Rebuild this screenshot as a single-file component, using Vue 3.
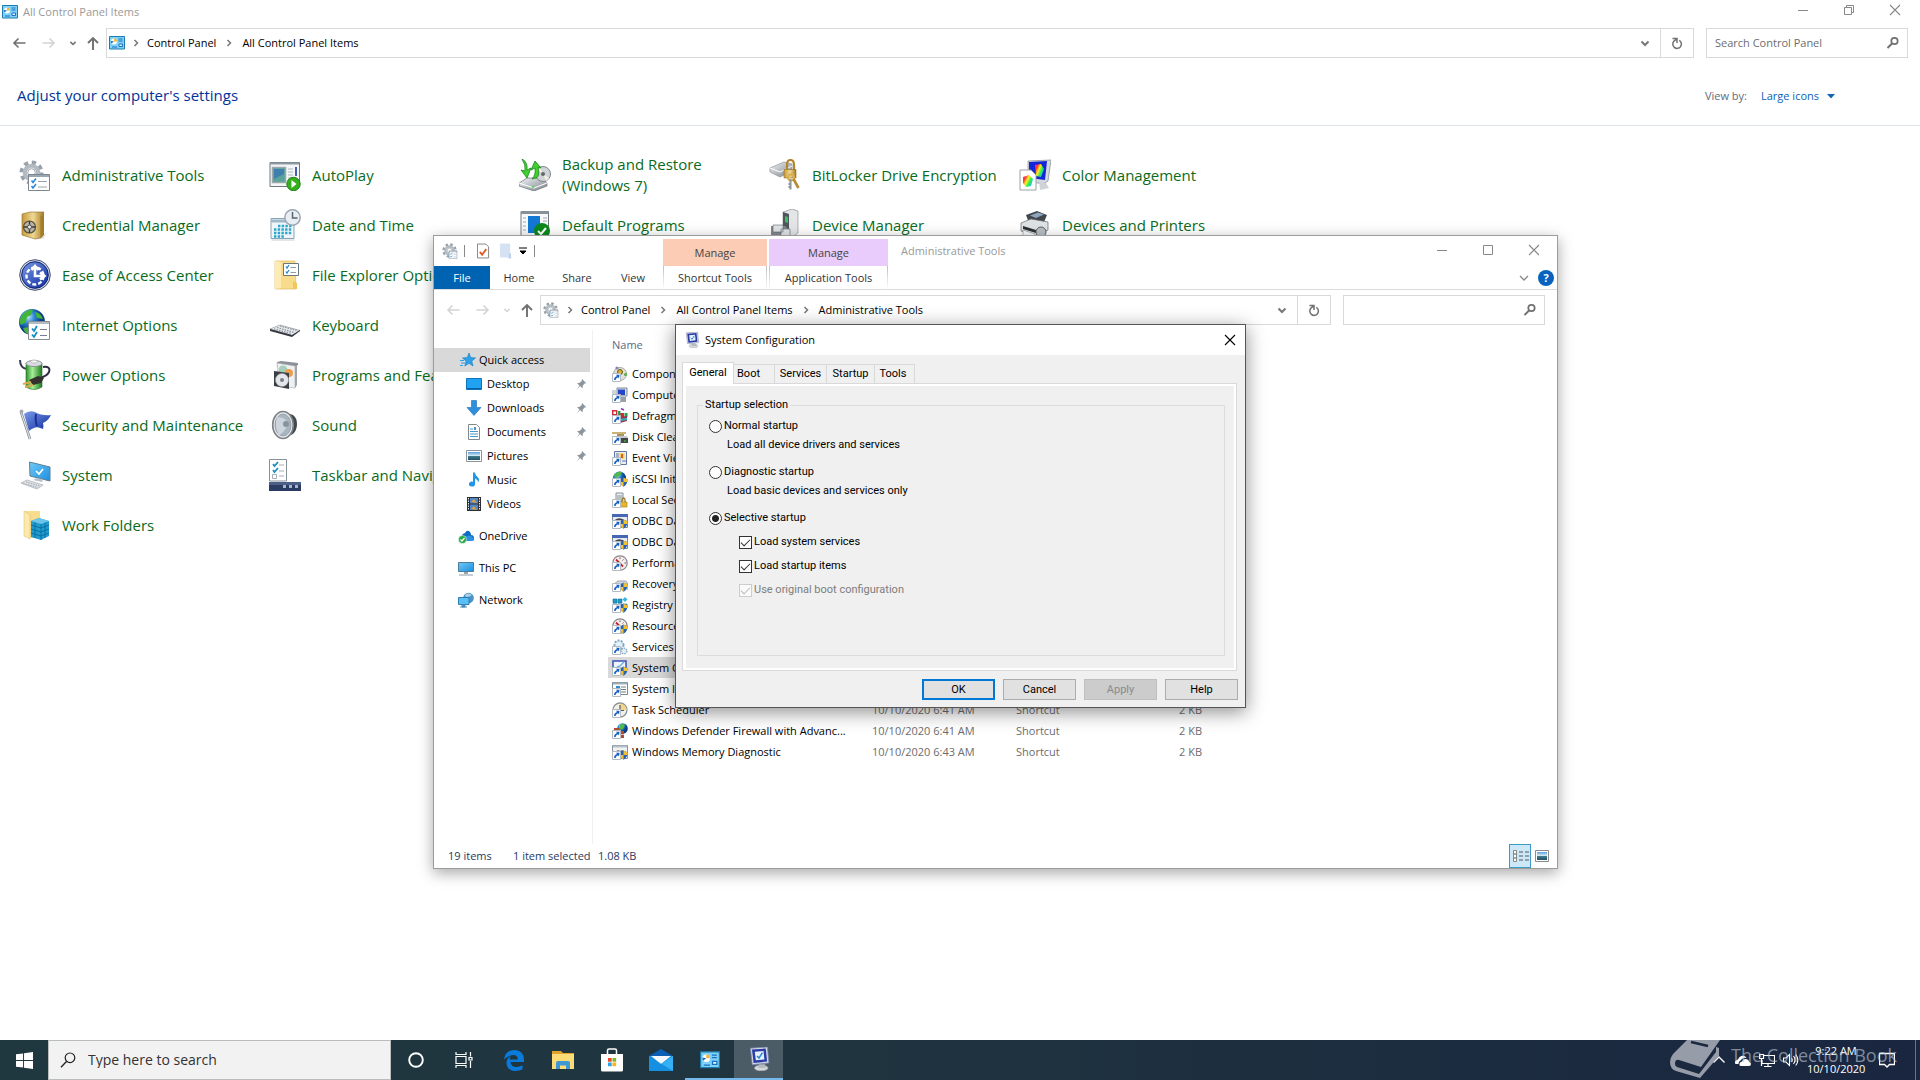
<script setup>
import { ref } from 'vue'

const panelColumns = [
  [
    ['admin', 'Administrative Tools'],
    ['safe', 'Credential Manager'],
    ['ease', 'Ease of Access Center'],
    ['inet', 'Internet Options'],
    ['power', 'Power Options'],
    ['flag', 'Security and Maintenance'],
    ['system', 'System'],
    ['workf', 'Work Folders'],
  ],
  [
    ['autoplay', 'AutoPlay'],
    ['datetime', 'Date and Time'],
    ['folderopt', 'File Explorer Options'],
    ['keyboard', 'Keyboard'],
    ['programs', 'Programs and Features'],
    ['sound', 'Sound'],
    ['taskbar', 'Taskbar and Navigation'],
  ],
  [
    ['backup', 'Backup and Restore (Windows 7)'],
    ['defaults', 'Default Programs'],
  ],
  [
    ['bitlocker', 'BitLocker Drive Encryption'],
    ['devmgr', 'Device Manager'],
  ],
  [
    ['color', 'Color Management'],
    ['printer', 'Devices and Printers'],
  ],
]

const places = [
  { icon: 'star', name: 'Quick access', kind: 'active' },
  { icon: 'desk', name: 'Desktop', kind: 'child', pin: true },
  { icon: 'down', name: 'Downloads', kind: 'child', pin: true },
  { icon: 'docs', name: 'Documents', kind: 'child', pin: true },
  { icon: 'pics', name: 'Pictures', kind: 'child', pin: true },
  { icon: 'music', name: 'Music', kind: 'child' },
  { icon: 'video', name: 'Videos', kind: 'child' },
  { icon: 'onedrive', name: 'OneDrive', kind: 'root' },
  { icon: 'pc', name: 'This PC', kind: 'root' },
  { icon: 'network', name: 'Network', kind: 'root' },
]

const files = [
  ['f-comp', 'Component Services', '6:41', false],
  ['f-mgmt', 'Computer Management', '6:41', false],
  ['f-defrag', 'Defragment and Optimize Drives', '6:41', false],
  ['f-disk', 'Disk Cleanup', '6:41', false],
  ['f-event', 'Event Viewer', '6:41', false],
  ['f-iscsi', 'iSCSI Initiator', '6:41', true],
  ['f-local', 'Local Security Policy', '6:41', false],
  ['f-odbc', 'ODBC Data Sources (32-bit)', '6:41', true],
  ['f-odbc', 'ODBC Data Sources (64-bit)', '6:41', true],
  ['f-perf', 'Performance Monitor', '6:41', false],
  ['f-rec', 'Recovery Drive', '6:41', true],
  ['f-reg', 'Registry Editor', '6:41', true],
  ['f-perf', 'Resource Monitor', '6:41', true],
  ['f-serv', 'Services', '6:41', false],
  ['f-conf', 'System Configuration', '6:41', true],
  ['f-info', 'System Information', '6:41', false],
  ['f-task', 'Task Scheduler', '6:41', false],
  ['f-fire', 'Windows Defender Firewall with Advanc...', '6:41', false],
  ['f-mem', 'Windows Memory Diagnostic', '6:43', true],
]

const tabs = ['General', 'Boot', 'Services', 'Startup', 'Tools']
const startup = ref('selective')
const loadServices = ref(true)
const loadItems = ref(true)
const originalBoot = ref(true)

const apps = [
  ['t-cortana', 'Cortana', ''],
  ['t-view', 'Task View', ''],
  ['t-edge', 'Microsoft Edge', ''],
  ['t-files', 'File Explorer', ''],
  ['t-store', 'Microsoft Store', ''],
  ['t-mail', 'Mail', ''],
  ['cpl', 'Control Panel', 'running'],
  ['msconfig', 'System Configuration', 'current'],
]
</script>

<template>
  <div class="desktop">
    <svg class="sheet" aria-hidden="true">
      <defs>
        <linearGradient id="g-steel" x2="1" y2="1"><stop stop-color="#f4f6f8" /><stop offset="1" stop-color="#7b8289" /></linearGradient>
        <linearGradient id="g-gold" x2="1"><stop stop-color="#c79a3e" /><stop offset=".5" stop-color="#f0d893" /><stop offset="1" stop-color="#a67c25" /></linearGradient>
        <linearGradient id="g-blue" x2="1" y2="1"><stop stop-color="#7a9be8" /><stop offset="1" stop-color="#0d2a9c" /></linearGradient>
        <linearGradient id="g-sky" x2="1" y2="1"><stop stop-color="#6fcaf7" /><stop offset="1" stop-color="#1c8ede" /></linearGradient>
        <linearGradient id="g-green" x2="1"><stop stop-color="#2c8f2b" /><stop offset=".4" stop-color="#a5ef97" /><stop offset="1" stop-color="#1f7a20" /></linearGradient>
        <linearGradient id="g-rain" x2="1" y2=".6"><stop stop-color="#f2f" /><stop offset=".25" stop-color="#f33" /><stop offset=".5" stop-color="#fe2" /><stop offset=".75" stop-color="#2e5" /><stop offset="1" stop-color="#2bf" /></linearGradient>
        <linearGradient id="g-photo" y2="1" x2="0"><stop stop-color="#5b9fe0" /><stop offset=".5" stop-color="#dff0f6" /><stop offset=".55" stop-color="#3d7a86" /><stop offset="1" stop-color="#24506b" /></linearGradient>
        <radialGradient id="g-globe" cx=".35" cy=".3"><stop stop-color="#bfe8ff" /><stop offset=".5" stop-color="#2a86d6" /><stop offset="1" stop-color="#0b3c86" /></radialGradient>
      </defs>

      <!-- controls -->
      <symbol id="back" viewBox="0 0 16 16"><path d="M14.500 8H3M7.500 3.500L3 8l4.500 4.500" fill="none" stroke="currentColor" stroke-width="1.600" /></symbol>
      <symbol id="fwd" viewBox="0 0 16 16"><path d="M1.500 8H13M8.500 3.500L13 8l-4.500 4.500" fill="none" stroke="currentColor" stroke-width="1.600" /></symbol>
      <symbol id="up" viewBox="0 0 16 16"><path d="M8 15V3M3 8l5-5 5 5" fill="none" stroke="currentColor" stroke-width="1.900" /></symbol>
      <symbol id="chev-d" viewBox="0 0 16 16"><path d="M4.500 6.500L8 10l3.500-3.500" fill="none" stroke="currentColor" stroke-width="2" /></symbol>
      <symbol id="chev-r" viewBox="0 0 16 16"><path d="M6.500 5L9.500 8l-3 3" fill="none" stroke="currentColor" stroke-width="1.500" /></symbol>
      <symbol id="thin-d" viewBox="0 0 16 16"><path d="M4 6l4 4 4-4" fill="none" stroke="currentColor" stroke-width="1.300" /></symbol>
      <symbol id="reload" viewBox="0 0 16 16"><path d="M10.300 5.400A4.300 4.300 0 1 1 5 6.100L7.500 4M3.500 3.500h4.500v4.500" fill="none" stroke="currentColor" stroke-width="1.500" /></symbol>
      <symbol id="lens" viewBox="0 0 16 16"><circle cx="9.500" cy="6" r="3.200" fill="none" stroke="currentColor" stroke-width="1.700" /><path d="M7 8.500L2.500 13" stroke="currentColor" stroke-width="1.900" /></symbol>
      <symbol id="min" viewBox="0 0 16 16"><path d="M3 8.500h10" stroke="currentColor" /></symbol>
      <symbol id="max" viewBox="0 0 16 16"><path d="M3.500 3.500h9v9h-9z" fill="none" stroke="currentColor" /></symbol>
      <symbol id="restore" viewBox="0 0 16 16"><path d="M3.500 5.500h7v7h-7zM5.500 5.500v-2h7v7h-2" fill="none" stroke="currentColor" /></symbol>
      <symbol id="close" viewBox="0 0 16 16"><path d="M3 3l10 10M13 3L3 13" stroke="currentColor" stroke-width="1.100" /></symbol>
      <symbol id="pin" viewBox="0 0 16 16"><path d="M9 2l5 5-2 .5-2 2.500-.3 3-2.700-2.600L3 14.500l3.300-4.800L3.500 7l3-.4L9 4.200z" fill="#8d959c" /></symbol>
      <symbol id="sheet-list" viewBox="0 0 14 15"><path d="M.5 1.500h13v13H.5z" fill="#fff" stroke="#8796a5" /><path d="M0 3h14" stroke="#8796a5" /><path d="M2.500 6l1 1.500L6 5M2.500 10.500l1 1.500L6 9.500" fill="none" stroke="#2a86d6" stroke-width="1.200" /><path d="M7.500 7H12M7.500 11.500H12" stroke="#aab3bb" /></symbol>

      <symbol id="cpl" viewBox="0 0 16 14"><path d="M.5.500h15v12.500H.5z" fill="#7ed2f7" stroke="#1f7cae" /><circle cx="5" cy="5.500" r="3" fill="#fff" /><path d="M5 5.500V2.500A3 3 0 0 1 8 5.500z" fill="#f0b53a" /><path d="M5 5.500L2.500 7.500A3 3 0 0 1 2 5z" fill="#1a6fc4" /><path d="M9.500 3h4M9.500 5h4M10 8h3.500v2.500H10zM3 11h5" stroke="#1a6fc4" fill="#e4f6ff" /></symbol>
      <symbol id="gear" viewBox="0 0 24 24"><circle cx="12" cy="12" r="9.500" fill="none" stroke="#98a1a9" stroke-width="4" stroke-dasharray="4 3.460" /><circle cx="12" cy="12" r="6.500" fill="#eef1f3" stroke="#b3bbc2" stroke-width="4" /><circle cx="12" cy="12" r="3.600" fill="#fff" stroke="#8d959d" stroke-width=".8" /></symbol>
      <symbol id="tools16" viewBox="0 0 16 16"><use href="#gear" width="15" height="15" /><use href="#sheet-list" x="6" y="7" width="10" height="9" /></symbol>
      <symbol id="msconfig" viewBox="0 0 16 16"><ellipse cx="9.500" cy="14" rx="4.500" ry="1.900" fill="#d5d8dc" stroke="#a3a8ae" stroke-width=".4" /><path d="M8 11.500h4l.5 2.500h-5z" fill="#b5bac1" /><path d="M2.300.8L13.600 0l1 10.600-11.100 1.200z" fill="#d4d9e6" stroke="#8088ab" stroke-width=".5" /><path d="M3.300 1.700l9.200-.7.9 8.700-9 1z" fill="#2a3da6" /><path d="M5.200 3.200l5.800-.5.600 5.600-5.700.6z" fill="#e7f1fd" /><path d="M6.700 6l1.300 1.300 2.300-3.500" fill="none" stroke="#2a86d6" stroke-width="1" /></symbol>

      <!-- control panel, 32px -->
      <symbol id="admin" viewBox="0 0 32 32"><use href="#gear" x="0" y="0" width="25" height="27" /><path d="M9.500 15.500h21v16h-21z" fill="#fff" stroke="#7c8791" /><path d="M10 17h20" stroke="#9aa6b1" stroke-width="2" /><path d="M12.500 21.500l1.500 2 3-4M12.500 27l1.500 2 3-4" fill="none" stroke="#2a86d6" stroke-width="1.500" /><path d="M19 22.500h9M19 28h9" stroke="#9aa3ac" /></symbol>
      <symbol id="safe" viewBox="0 0 32 32"><path d="M22 29l6-6-4 7z" fill="#ddd" /><path d="M3 5l8-2h14l-3 4v22l-6 1-13-4z" fill="url(#g-gold)" stroke="#8a6a22" stroke-width=".6" /><path d="M22 7l3-4v23l-3 3z" fill="#a67c25" /><circle cx="10.500" cy="18" r="6" fill="#b9b4a6" stroke="#55503f" stroke-width="1.200" /><circle cx="10.500" cy="18" r="2" fill="#eee" stroke="#444" /><path d="M10.500 12v3.500M10.500 20.500V24M5 18h3M13 18h3.500" stroke="#3d3a2f" stroke-width="1.400" /></symbol>
      <symbol id="ease" viewBox="0 0 32 32"><circle cx="16" cy="16" r="15.300" fill="#cdd6ea" stroke="#46506c" /><circle cx="16" cy="16" r="13.300" fill="url(#g-blue)" stroke="#10216a" /><circle cx="16" cy="17" r="8.500" fill="none" stroke="#fff" stroke-width="2.400" stroke-dasharray="4 2" /><path d="M16 7v10h9M21 13.500l4.500 3.500-4.500 3.500M12.500 11L16 7l3.500 4" fill="none" stroke="#fff" stroke-width="2.600" /></symbol>
      <symbol id="inet" viewBox="0 0 32 32"><circle cx="13" cy="13" r="13" fill="url(#g-globe)" /><path d="M3 6q5-6 11-5l-2 5-4 2-1 5-5 3q-3-4 1-10zM16 3q6 1 8 7l-6-1zM4 19l6-1 3 4-1 4q-6-1-8-7z" fill="#45b53a" /><path d="M9.500 12.500h21v18h-21z" fill="#fff" stroke="#838d96" /><path d="M10 14h20" stroke="#b4bcc4" stroke-width="2" /><path d="M13 19.500l2 2.500 3-5M13 25.500l2 2.500 3-5" fill="none" stroke="#138ec4" stroke-width="1.800" /><path d="M21 20.500h7M21 26.500h7" stroke="#76808a" /></symbol>
      <symbol id="power" viewBox="0 0 32 32"><path d="M1 1q0 8 7 9" fill="none" stroke="#3b3f55" stroke-width="2" /><path d="M7 4v24q8 5 16 0V4z" fill="url(#g-green)" stroke="#2a6f29" stroke-width=".6" /><ellipse cx="15" cy="4.500" rx="8" ry="3" fill="#d9dde1" stroke="#8c9299" /><ellipse cx="15" cy="2.500" rx="3.500" ry="1.600" fill="#f3f4f5" stroke="#999" stroke-width=".5" /><path d="M24 8q8-1 6 5-2 4-9 6" fill="none" stroke="#2d2c42" stroke-width="2" /><path d="M10 21l9-4 6 2-3 5-8 2z" fill="#35322e" /><path d="M4 25l8-2M6 28l8-2" stroke="#d9a94c" stroke-width="2" /></symbol>
      <symbol id="flag" viewBox="0 0 32 32"><path d="M2 3l9 27" stroke="#8e949b" stroke-width="2.600" /><path d="M2 3l9 27" stroke="#e3e6e9" /><circle cx="2.500" cy="2.500" r="1.900" fill="#a5abb1" /><path d="M5 5q5-4 11-2 7 4 16 3-3 6-8 8 1 3 0 6-6-3-9-1-3 1-5 3z" fill="url(#g-blue)" /><path d="M17 5q-1 7 1 12" fill="none" stroke="#1b2f9e" stroke-width="2" /></symbol>
      <symbol id="system" viewBox="0 0 32 32"><path d="M10.500 3l20.500 5v14L11 17z" fill="url(#g-sky)" stroke="#5f7f93" /><path d="M17 12l3 3 4-5" fill="none" stroke="#fff" stroke-width="1.700" /><path d="M18 19l6 1.500-1 2.500-9-2z" fill="#bac1c8" /><path d="M2 24l6-3 16 5-6 4z" fill="#dfe3e7" stroke="#a3abb2" stroke-width=".7" /><path d="M4 24.500l15 4M7 23l14 4" stroke="#9fa7ae" stroke-dasharray="1.500 1" /></symbol>
      <symbol id="workf" viewBox="0 0 32 32"><path d="M5 2h16v26l-10 1-6-2z" fill="#f6dc8c" /><path d="M5 2l6 4v24l-6-3z" fill="#fbe9b0" stroke="#dfbf61" stroke-width=".5" /><path d="M12 12l8-3 10 3v15l-8 4-10-3z" fill="#1f9bcf" /><path d="M12 16l10 3 8-3M12 20l10 3 8-3M12 24l10 3 8-3M22 15v16M16 11v18M26 13v16" fill="none" stroke="#0b6c9c" stroke-width=".9" /><path d="M12 12l10 3 8-3-10-3z" fill="#6dc6ea" /></symbol>
      <symbol id="autoplay" viewBox="0 0 32 32"><path d="M1 3.500h29.500v24H1z" fill="#f4f6f7" stroke="#6f787f" /><path d="M1 4.500h29" stroke="#8f9aa2" stroke-width="2" /><path d="M3.500 8.500h13v15h-13z" fill="#5aa39a" stroke="#9aa8ae" stroke-width="1.500" /><path d="M5 10h10v5L5 20z" fill="#3f7fae" /><path d="M19 10h5M19 13h5M19 16h5M19 19h4" stroke="#aeb6bc" /><path d="M27 8v9" stroke="#4560b5" stroke-width="2" /><circle cx="24.500" cy="25" r="6.700" fill="#34b01c" stroke="#1d8410" /><path d="M22.500 21l5 4-5 4z" fill="#fff" /></symbol>
      <symbol id="datetime" viewBox="0 0 32 32"><path d="M2 9.500h23v20H2z" fill="#eef6fb" stroke="#8aa5b5" /><path d="M2 10.500h23v3H2z" fill="#9fb9c7" /><path d="M2.500 31h23" stroke="#c5ced4" /><path d="M9 17h14M5 20.500h18M5 24h18M5 27.500h11" stroke="#2aa7c8" stroke-width="2.400" stroke-dasharray="2.400 1.300" /><circle cx="23.500" cy="8.500" r="7.700" fill="#e8eef3" stroke="#9aa7b2" stroke-width="1.500" /><path d="M23.500 3v6h5" fill="none" stroke="#59646e" stroke-width="1.500" /></symbol>
      <symbol id="folderopt" viewBox="0 0 32 32"><path d="M6 2h20l1 28H6z" fill="#f8dc8c" stroke="#dfb95c" stroke-width=".7" /><path d="M6 2l6 1v26l-6 1z" fill="#fcebb5" /><path d="M24 22l4 2v6h-4z" fill="#f0c75b" /><path d="M14.500 4.500h15v12h-15z" fill="#fff" stroke="#6b7680" /><path d="M17 7.500l1 1.500 2-3M17 12.500l1 1.500 2-3" fill="none" stroke="#2a86d6" stroke-width="1.300" /><path d="M21.500 8.500H27M21.500 13.500H27" stroke="#909aa3" /></symbol>
      <symbol id="keyboard" viewBox="0 0 32 32"><path d="M1 20l10-4 20 5.500-8 5z" fill="#e8ebee" stroke="#858c93" stroke-width=".6" /><path d="M1 20l22 6v2L1 22zM23 26l8-5v1l-8 6z" fill="#33383e" /><path d="M5 20l17 4.500M8 18.500l17 5M11 17l17 4.500" stroke="#8d949b" stroke-width="1.200" stroke-dasharray="1.600 1" /></symbol>
      <symbol id="programs" viewBox="0 0 32 32"><path d="M8 3l4-1 17 2v2l-3 2H8z" fill="#8c9197" /><path d="M8 4l18 3v22l-16-2z" fill="#eef0f2" stroke="#a8adb2" stroke-width=".6" /><path d="M26 8l2-2v20l-2 3z" fill="#9da3a8" /><circle cx="14" cy="11" r="4.500" fill="#a7cdbd" /><circle cx="20" cy="14" r="4" fill="#ee9f4c" /><path d="M5 12l15 2v16L5 27z" fill="#3a3f45" /><circle cx="13" cy="21" r="6.500" fill="#e4e8ec" stroke="#aaa" stroke-width=".6" /><circle cx="13" cy="21" r="2" fill="#7a8087" /></symbol>
      <symbol id="sound" viewBox="0 0 32 32"><path d="M15 3l9 3q4 3 4 9t-4 10l-9 4z" fill="#43484c" /><ellipse cx="14" cy="16" rx="10.300" ry="13.500" fill="#e8ebee" stroke="#7b8187" stroke-width="1.600" /><ellipse cx="14" cy="16" rx="8" ry="11" fill="#a9b6c0" stroke="#848d94" stroke-width=".7" /><path d="M8 8q9 0 11 7-4 9-9 11-5-8-2-18z" fill="#d5dde4" opacity=".8" /><circle cx="17" cy="15" r="3" fill="#87939d" /></symbol>
      <symbol id="taskbar" viewBox="0 0 32 32"><path d="M.5.500h17V22H.5z" fill="#fff" stroke="#87919a" /><path d="M4 5l1.500 2L9 3M4 11l1.500 2L9 9" fill="none" stroke="#1c8fc4" stroke-width="1.800" /><path d="M3.500 15.500h4v4h-4z" fill="#fff" stroke="#a8afb6" /><path d="M10 6h5M10 12h5M10 17h5" stroke="#a8b0b7" /><path d="M0 23h32v9H0z" fill="#2b3c62" /><path d="M0 23h32v3H0z" fill="#4c5f87" /><path d="M14 26h3v3h-3zM20 26h3v3h-3zM26 26h3v3h-3z" fill="#a8b7cf" /></symbol>
      <symbol id="backup" viewBox="0 0 32 32"><path d="M0 24l8-5h16l4 5v3l-13 5-15-5z" fill="url(#g-steel)" stroke="#6a7076" stroke-width=".7" /><path d="M0 24l15 5 13-5" fill="none" stroke="#fff" /><circle cx="24" cy="15" r="7.500" fill="#cfd4d8" stroke="#7f868c" /><path d="M24 15l-6-4 3-3zM24 15l6 4-3 3z" fill="#f6f0e2" /><circle cx="24" cy="15" r="2" fill="#666" /><path d="M3 0q6 3 5 11l4-2-4 10-6-8 4 1q1-6-3-12z" fill="#3fd22d" stroke="#17861a" stroke-width=".8" /><path d="M13 20q4-4 3-11l-4 2 4-9 6 7-3-.5q2 7-1 10z" fill="#3fd22d" stroke="#17861a" stroke-width=".8" /><circle cx="14" cy="28" r="1" fill="#37e02d" /></symbol>
      <symbol id="defaults" viewBox="0 0 32 32"><path d="M2 2.500h27.500V30H2z" fill="#f7f8f9" stroke="#70787f" /><path d="M2 3.500h27.500" stroke="#87919a" stroke-width="3" /><path d="M9 7h12v17H9z" fill="#1378d4" /><path d="M4 9h3M4 13h3M4 17h3M4 21h3M24 9h4M24 12h4" stroke="#a0a8af" /><circle cx="23" cy="22" r="8" fill="#0b8a1c" /><path d="M19 22l3 3 5-6" fill="none" stroke="#fff" stroke-width="2" /></symbol>
      <symbol id="bitlocker" viewBox="0 0 32 32"><path d="M1 9l14-6 8 2v7L11 18 1 13z" fill="url(#g-steel)" stroke="#8c9298" stroke-width=".7" /><path d="M1 9l10 4 12-6" fill="none" stroke="#fff" /><path d="M18 11V6q0-5 3.500-5T25 6v5" fill="none" stroke="#b4862b" stroke-width="2.200" /><path d="M15 10.500h12V19H15z" fill="url(#g-gold)" stroke="#926b1c" stroke-width=".6" /><circle cx="22" cy="18.500" r="3" fill="none" stroke="#d9b04d" stroke-width="1.800" /><path d="M21.500 20v10.500M19.500 28h2M19.500 25h2" fill="none" stroke="#8e9499" stroke-width="2" /><path d="M24.500 20l5 9" stroke="#b58a30" stroke-width="2.600" /></symbol>
      <symbol id="devmgr" viewBox="0 0 32 32"><path d="M14 3l9-3 6 2v22l-6 4-9-3z" fill="#e3e5e7" stroke="#7f858a" stroke-width=".6" /><path d="M14 3l6 2v21l-6-3z" fill="#50565c" /><path d="M16 7l3 1v6l-3-1z" fill="#3cbf64" /><path d="M2 17h14l3 3v12H2z" fill="#83898f" /><path d="M4 16h10v7H4zM12 20h9v12h-9z" fill="#e1e4e6" stroke="#60666b" stroke-width=".6" /></symbol>
      <symbol id="color" viewBox="0 0 32 32"><path d="M9 2L32 1l-3 21-5 3-15-3z" fill="#d5dade" stroke="#81888f" stroke-width=".7" /><path d="M10 3l18-1-2 19-16-2z" fill="#1526d6" /><path d="M16 6l6-1 3 5-3 8-5-1z" fill="url(#g-rain)" /><path d="M20 22l7 2 3 5-9 2z" fill="#cfd3d7" /><path d="M1 11h11l5 5v15H1z" fill="#fff" stroke="#9aa1a8" /><path d="M4 18l6-2 4 4-2 7-5 1-3-4z" fill="url(#g-rain)" /></symbol>
      <symbol id="printer" viewBox="0 0 32 32"><path d="M7 6l11-4 10 4-3 7-15 1z" fill="#42474c" /><path d="M11 6.500l8-3 6 2-8 3.500z" fill="#8fa7bd" /><path d="M2 14l10-4 17 3v8l-12 6L2 22z" fill="#dfe2e5" stroke="#63696e" stroke-width=".7" /><path d="M4 17l13 4v3L4 20z" fill="#2d3135" /><path d="M4 21l12 4-3 5-9-3z" fill="#f8f9fa" stroke="#888" stroke-width=".6" /><circle cx="22" cy="23" r="5" fill="#b9bec3" stroke="#5b6166" /></symbol>

      <!-- places -->
      <symbol id="star" viewBox="0 0 16 16"><path d="M9 1l1.700 4.600 4.800.3-3.700 3.200 1.200 4.900-4-2.700-4.200 2.700 1.300-4.800L2.500 6l4.800-.4z" fill="#2da2e8" stroke="#1678bd" stroke-width=".6" /><path d="M0 8.500h4M1 11h4M0 13.500h3" stroke="#2da2e8" /></symbol>
      <symbol id="desk" viewBox="0 0 16 16"><path d="M.5 2.500h15v11H.5z" fill="#1fa2f2" stroke="#0b74bd" /><path d="M1 12.500h14" stroke="#0c5f9d" /></symbol>
      <symbol id="down" viewBox="0 0 16 16"><path d="M5.500.500h5v7H15l-7 8-7-8h4.500z" fill="#2f8fdb" stroke="#1b71b8" stroke-width=".6" /></symbol>
      <symbol id="docs" viewBox="0 0 16 16"><path d="M2.500.500h8l3 3v12h-11z" fill="#fff" stroke="#7e8992" /><path d="M4 5h3M4 7.500h8M4 10h8M4 12.500h8" stroke="#4b97ce" /><path d="M8 3h2v3H8z" fill="#4b97ce" /></symbol>
      <symbol id="pics" viewBox="0 0 16 16"><path d="M.5 2.500h15v11H.5z" fill="#fff" stroke="#8b949b" /><path d="M2 4h12v8H2z" fill="url(#g-photo)" /></symbol>
      <symbol id="music" viewBox="0 0 16 16"><path d="M7 .5h2q0 3 3 5 2 2 0 5 0-3-3-4v5.500a3 2.500 0 1 1-2-2.300z" fill="#1f97e3" /></symbol>
      <symbol id="video" viewBox="0 0 16 16"><path d="M1 1h14v14H1z" fill="#2b2f33" /><path d="M4 2h8v5.500H4zM4 8.500h8V14H4z" fill="#4f86c9" /><path d="M5 6l3-3 3 4zM5 13l3-3 3 4z" fill="#d9a13c" /><path d="M2.500 2v12M13.500 2v12" stroke="#e8eaec" stroke-dasharray="1.500 1" /></symbol>
      <symbol id="onedrive" viewBox="0 0 16 16"><path d="M4 10q-1-4 3-5 2-4 5-1 1 1 1 3 3 0 3 3t-3 3H6z" fill="#0f6cc4" /><path d="M6 13q-1-5 4-5 3-2 6 3 0 2-3 2z" fill="#2a91e6" /><circle cx="4.500" cy="11.500" r="4" fill="#27a844" stroke="#fff" stroke-width=".5" /><path d="M2.500 11.500L4 13l2.500-3" fill="none" stroke="#fff" stroke-width="1.200" /></symbol>
      <symbol id="pc" viewBox="0 0 16 16"><path d="M.5 2.500h15v9H.5z" fill="url(#g-sky)" stroke="#4d7d9b" /><path d="M6 12h4v2H6z" fill="#9aa6ae" /><path d="M1 15h14" stroke="#8d9aa3" /></symbol>
      <symbol id="network" viewBox="0 0 16 16"><circle cx="10.500" cy="6" r="5.300" fill="#4c93c4" /><path d="M7 3q3-3 7 0-2 2-6 2z" fill="#a8d3ec" /><path d="M.5 5.500h10.500v7H.5z" fill="#59bff5" stroke="#2c7fb5" /><path d="M4 13h3v2H4zM2 15h7" stroke="#4d8db8" fill="#4d8db8" /></symbol>

      <!-- shortcuts -->
      <symbol id="arrow" viewBox="0 0 16 16"><path d="M.5 7.500h8v8h-8z" fill="#fff" stroke="#b4bac0" /><path d="M2 14q0-3 3-4L4 8.700l3.500.1L7 12.500l-1-1.200Q4 12 3.500 14z" fill="#1560c0" /></symbol>
      <symbol id="shield" viewBox="0 0 16 16"><path d="M8 8q2-.3 3.500-1.500Q13 7.700 15.500 8q0 6-4 7.700Q8 14 8 8z" fill="#2b62ad" /><path d="M11.500 6.500Q13 7.700 15.500 8v3h-4zM8.200 11h3.300v4.700Q9 14.500 8.200 11z" fill="#f2c233" /></symbol>
      <symbol id="f-comp" viewBox="0 0 16 16"><circle cx="8" cy="8" r="6.500" fill="#e3e4d8" stroke="#a5a79c" /><circle cx="8" cy="6" r="2.500" fill="#d7b131" stroke="#6c5a17" /><circle cx="5" cy="2" r="1.600" fill="#8a87b8" /><circle cx="13.500" cy="8.500" r="1.600" fill="#59b04d" /></symbol>
      <symbol id="f-mgmt" viewBox="0 0 16 16"><path d="M5 1h10v8H5z" fill="#dce3ea" stroke="#7d8995" /><path d="M6 2.500h7V8H6z" fill="#2546c8" /><path d="M8 10h6v5H8z" fill="#96a1ab" /><path d="M0 3h4v5H0z" fill="#cdd4da" /></symbol>
      <symbol id="f-defrag" viewBox="0 0 16 16"><path d="M.7 2.700h4v4h-4z" fill="#fff" stroke="#d3273a" stroke-width="1.400" /><path d="M8 5h4v4H8z" fill="#d3273a" /><path d="M6 3h2.500v5H6z" fill="#29a04c" /><path d="M12.500 5h3v4h-3z" fill="#29a04c" /><path d="M9 .500l3 1.500" stroke="#8a35b0" stroke-width="1.500" /><path d="M7 9l8-1v5l-7 2z" fill="#9a3552" /><path d="M8 12l7-1" stroke="#29b8b8" stroke-width="2" /></symbol>
      <symbol id="f-disk" viewBox="0 0 16 16"><path d="M0 3h14v2H0z" fill="#c9b378" /><path d="M5 5h7v2H5z" fill="#a89562" /><path d="M7 9h9v5H7z" fill="#3f4a45" /><path d="M7 9l2-2h6l1 2z" fill="#c5cac7" /><path d="M12 12h2" stroke="#46e04a" /></symbol>
      <symbol id="f-event" viewBox="0 0 16 16"><path d="M2.500 1.500h12v13h-12z" fill="#e8edf6" stroke="#6077a4" /><path d="M4 4h3M4 6h3M10 11h4" stroke="#6077a4" /><path d="M7.500 3h5v6h-5z" fill="#f7d257" /><path d="M10 4v4" stroke="#c43b1f" stroke-width="1.500" /></symbol>
      <symbol id="f-iscsi" viewBox="0 0 16 16"><circle cx="7.500" cy="7" r="6.500" fill="url(#g-globe)" /><path d="M2 4q4-5 8-3L8 5 5 6 4 9z" fill="#52b947" /></symbol>
      <symbol id="f-local" viewBox="0 0 16 16"><path d="M4 1h7v8H4z" fill="#edf0f2" stroke="#84909a" /><path d="M5 4h5M5 6h5" stroke="#84909a" /><path d="M10 10V8q0-2 1.500-2T13 8v2" fill="none" stroke="#9a7a20" stroke-width="1.300" /><path d="M8 10h7v5H8z" fill="#e6b62e" stroke="#a27d18" stroke-width=".6" /></symbol>
      <symbol id="f-odbc" viewBox="0 0 16 16"><path d="M.5 1.500h15v13H.5z" fill="#e9ecef" stroke="#7a8791" /><path d="M0 1h16v3H0z" fill="#4668b4" /><path d="M3 8q5-4 10 1" stroke="#434b52" fill="none" stroke-width="2" /></symbol>
      <symbol id="f-perf" viewBox="0 0 16 16"><circle cx="8" cy="8" r="7.200" fill="#f5eeee" stroke="#8c8486" stroke-width="1.200" /><path d="M4 4.500l7 7" stroke="#c32430" stroke-width="1.800" /><path d="M8 2.500v1.500M12.500 8H14M11.500 4.500l-1 1" stroke="#555" /></symbol>
      <symbol id="f-rec" viewBox="0 0 16 16"><path d="M2 8l4-3h8l2 3v5H2z" fill="#d7dade" stroke="#a0a7ad" /></symbol>
      <symbol id="f-reg" viewBox="0 0 16 16"><path d="M1 2h4v4H1zM6 2h4v4H6zM6 7h4v4H6zM1 7h4v4H1zM11 7h4v4h-4z" fill="#1e9cc9" stroke="#0f6d93" stroke-width=".6" /><path d="M13 0l2.500 2.500L13 5l-2.500-2.500z" fill="#3db4dd" /></symbol>
      <symbol id="f-serv" viewBox="0 0 16 16"><circle cx="7" cy="6" r="4.500" fill="#e3f0f7" stroke="#83a9c0" stroke-width="2" stroke-dasharray="2 1.200" /><circle cx="12" cy="12" r="2.800" fill="#e3f0f7" stroke="#83a9c0" stroke-width="1.500" stroke-dasharray="1.500 1" /></symbol>
      <symbol id="f-conf" viewBox="0 0 16 16"><path d="M1 1h13v10H1z" fill="#eef4ff" stroke="#3a50b3" stroke-width="1.500" /><path d="M5 7l3-1 4-4" fill="none" stroke="#6ab0d9" stroke-width="1.400" /><path d="M4 12h8v3H4z" fill="#bcc2c8" /></symbol>
      <symbol id="f-info" viewBox="0 0 16 16"><path d="M.5 1.500h15v12H.5z" fill="#fff" stroke="#7d8991" /><path d="M1 2.500h14" stroke="#9fb0bd" stroke-width="2" /><path d="M4 5h4v5H4z" fill="#2d8bd2" /><path d="M9 6h5M9 8.500h5M9 11h5" stroke="#6f7c85" /></symbol>
      <symbol id="f-task" viewBox="0 0 16 16"><circle cx="8" cy="8" r="7" fill="#f2efe4" stroke="#8c929a" stroke-width="1.300" /><path d="M8 1.500A6.500 6.500 0 0 1 14.500 8H8z" fill="#efd58a" /><path d="M8 3v5.500h4" fill="none" stroke="#555c64" stroke-width="1.200" /></symbol>
      <symbol id="f-fire" viewBox="0 0 16 16"><circle cx="10.500" cy="5.500" r="5.300" fill="url(#g-globe)" /><path d="M8 2q3-2 5 0l-2 4-3 1z" fill="#52b947" /><path d="M2 5h5v3h5v7H2z" fill="#b04a35" /><path d="M2 7.500h5M8 11.500h4" stroke="#e7b8a8" /></symbol>
      <symbol id="f-mem" viewBox="0 0 16 16"><path d="M.5 1.500h15v13H.5z" fill="#f1f3f5" stroke="#88939b" /><path d="M1 2.500h14" stroke="#b6c0c7" stroke-width="2" /><path d="M3 8q3-3 5-1 3-2 5 1v3H3z" fill="#525a61" /></symbol>

      <!-- taskbar -->
      <symbol id="t-start" viewBox="0 0 18 18"><path d="M0 2.500l7.500-1V8.500H0zM8.500 1.300L18 0v8.500H8.500zM0 9.500h7.500v7L0 15.500zM8.500 9.500H18V18l-9.500-1.300z" fill="#fff" /></symbol>
      <symbol id="t-cortana" viewBox="0 0 24 24"><circle cx="12" cy="12" r="6.800" fill="none" stroke="#fff" stroke-width="1.900" /></symbol>
      <symbol id="t-view" viewBox="0 0 24 24"><path d="M3 8.500h10v7H3zM3 4v2.500h10V4M3 20v-2.500h10V20M17.500 4v4.500M17.500 13v7M16 9.500h3v2.500h-3z" fill="none" stroke="#fff" stroke-width="1.200" /></symbol>
      <symbol id="t-edge" viewBox="0 0 24 24"><path d="M2 11.500Q3 2 12.500 2 22 2.500 22 12v2H8.500q.5 5 6 5 3.500 0 6-1.700v4Q17.500 23 13 23q-8-.5-8.500-8 0-5 4.500-7-1.500 1.500-1.500 3.500h8.300q0-4.500-4.300-4.500-5 .2-9.500 4.500z" fill="#0a7adb" /></symbol>
      <symbol id="t-files" viewBox="0 0 24 24"><path d="M1 3h9l2 2h11v16H1z" fill="#dfa32d" /><path d="M1 6h22v15H1z" fill="#fbdc76" /><path d="M5 21v-6q0-2 2-2h10q2 0 2 2v6h-4v-3.500H9V21z" fill="#3f97d3" /></symbol>
      <symbol id="t-store" viewBox="0 0 24 24"><path d="M7.500 6V2.500Q7.500 1 9 1h6q1.500 0 1.500 1.500V6" fill="none" stroke="#fff" stroke-width="1.500" /><path d="M1 6h22v16q0 1.500-1.500 1.500h-19Q1 23.500 1 22z" fill="#fff" /><path d="M8 10h3.700v3.700H8z" fill="#e74a25" /><path d="M12.500 10h3.700v3.700h-3.700z" fill="#7db72f" /><path d="M8 14.500h3.700v3.700H8z" fill="#2aa3e8" /><path d="M12.500 14.500h3.700v3.700h-3.700z" fill="#f7b51b" /></symbol>
      <symbol id="t-mail" viewBox="0 0 24 24"><path d="M0 8l12-7 12 7-12 9z" fill="#0b60b5" /><path d="M0 8h24v15H0z" fill="#1590e0" /><path d="M2 8h20L12 16z" fill="#f4f8fc" /><path d="M24 8v15L8 13l4 3z" fill="#35b0f5" /></symbol>
      <symbol id="t-lens" viewBox="0 0 16 16"><circle cx="10" cy="5.800" r="4.800" fill="none" stroke="#222" stroke-width="1.200" /><path d="M6.700 9.300L1 15.300" stroke="#222" stroke-width="1.300" /></symbol>
      <symbol id="s-up" viewBox="0 0 16 16"><path d="M2.500 10.500L8 5l5.500 5.500" fill="none" stroke="#fff" stroke-width="1.400" /></symbol>
      <symbol id="s-cloud" viewBox="0 0 16 16"><path d="M0 11q-.5-3 3-3.500Q5 3 9 4q2 .5 2.500 2-4-1-6 2.500-2 .500-2 3.500H1q-1 0-1-1z" fill="#fff" /><path d="M4.500 13q-.5-3 2.500-3.500 1-3 4-2.500t3 3q2 0 2 2t-2 2H6q-1.500 0-1.500-1z" fill="#fff" /></symbol>
      <symbol id="s-net" viewBox="0 0 16 16"><path d="M5 3.500h10.500v8H3V8M9 12v2.500M5 14.500h7.500M.5 2.500h4v4h-4zM2.500 6.500V14" fill="none" stroke="#fff" stroke-width="1.200" /></symbol>
      <symbol id="s-vol" viewBox="0 0 16 16"><path d="M.500 6H3l3.500-3.500v11L3 10H.5zM8.500 6q1.500 2 0 4M10.500 4q3 4 0 8M12.700 2.500q4.300 5.500 0 11" fill="none" stroke="#fff" stroke-width="1.100" /></symbol>
      <symbol id="s-note" viewBox="0 0 16 16"><path d="M.500 1.500h15v11H10.500L8 15l-2.500-2.500h-5z" fill="none" stroke="#fff" stroke-width="1.300" /></symbol>
    </svg>

    <main class="panel">
      <header class="titlebar">
        <svg class="i16"><use href="#cpl" /></svg>
        <h1>All Control Panel Items</h1>
        <div class="winbtns">
          <button aria-label="Minimize"><svg class="i16"><use href="#min" /></svg></button>
          <button aria-label="Restore"><svg class="i16"><use href="#restore" /></svg></button>
          <button aria-label="Close"><svg class="i16"><use href="#close" /></svg></button>
        </div>
      </header>

      <div class="navbar">
        <div class="arrows">
          <button aria-label="Back"><svg class="i16"><use href="#back" /></svg></button>
          <button aria-label="Forward" class="off"><svg class="i16"><use href="#fwd" /></svg></button>
          <button aria-label="Recent" class="narrow"><svg class="i12"><use href="#chev-d" /></svg></button>
          <button aria-label="Up"><svg class="i16"><use href="#up" /></svg></button>
        </div>
        <nav class="address">
          <svg class="i16"><use href="#cpl" /></svg>
          <svg class="i16 sep"><use href="#chev-r" /></svg><a href="#">Control Panel</a>
          <svg class="i16 sep"><use href="#chev-r" /></svg><a href="#">All Control Panel Items</a>
          <button aria-label="Previous locations" class="drop"><svg class="i16"><use href="#chev-d" /></svg></button>
          <button aria-label="Refresh" class="reload"><svg class="i16"><use href="#reload" /></svg></button>
        </nav>
        <label class="search"><input type="text" placeholder="Search Control Panel" aria-label="Search Control Panel"><svg class="i16"><use href="#lens" /></svg></label>
      </div>

      <div class="heading">
        <h2>Adjust your computer's settings</h2>
        <label for="view-by">View by:</label>
        <select id="view-by"><option>Large icons</option><option>Small icons</option></select>
        <svg class="tri" viewBox="0 0 8 5"><path d="M0 0h8L4 4.500z" fill="#1464b4" /></svg>
      </div>

      <div class="items">
        <div v-for="(col, c) in panelColumns" :key="c" class="col">
          <a v-for="item in col" :key="item[0]" href="#"><svg class="i32"><use :href="'#' + item[0]" /></svg><span>{{ item[1] }}</span></a>
        </div>
      </div>
    </main>

    <section class="explorer" aria-label="Administrative Tools">
      <header class="ex-top">
        <div class="quick">
          <svg class="i16"><use href="#tools16" /></svg>
          <i class="bar"></i>
          <svg class="doc" viewBox="0 0 14 16"><path d="M.500.500h9l3 3v12H.5z" fill="#fff" stroke="#7d7d7d" /><path d="M3 9l2.500 3L10 6" fill="none" stroke="#e4561e" stroke-width="1.900" /></svg>
          <svg class="doc" viewBox="0 0 14 16"><path d="M1 0h11v15H1z" fill="#d5e2f4" /><path d="M11 10l2 1v5h-3z" fill="#bfd1ea" /></svg>
          <svg class="more" viewBox="0 0 8 8"><path d="M0 1h8M1 4h6L4 7z" stroke="#000" fill="#000" /></svg>
          <i class="bar"></i>
        </div>
        <div class="manage peach">Manage</div>
        <div class="manage lilac">Manage</div>
        <h2>Administrative Tools</h2>
        <div class="winbtns">
          <button aria-label="Minimize"><svg class="i16"><use href="#min" /></svg></button>
          <button aria-label="Maximize"><svg class="i16"><use href="#max" /></svg></button>
          <button aria-label="Close"><svg class="i16"><use href="#close" /></svg></button>
        </div>
      </header>
      <div class="ribbon">
        <button class="file">File</button>
        <button class="rt">Home</button>
        <button class="rt">Share</button>
        <button class="rt view">View</button>
        <button class="rt tool-a">Shortcut Tools</button>
        <button class="rt tool-b">Application Tools</button>
        <span class="fill"></span>
        <button aria-label="Expand ribbon" class="fold"><svg class="i16"><use href="#thin-d" /></svg></button>
        <button class="help" aria-label="Help">?</button>
      </div>

      <div class="navbar">
        <div class="arrows">
          <button aria-label="Back" class="off"><svg class="i16"><use href="#back" /></svg></button>
          <button aria-label="Forward" class="off"><svg class="i16"><use href="#fwd" /></svg></button>
          <button aria-label="Recent" class="narrow off"><svg class="i12"><use href="#chev-d" /></svg></button>
          <button aria-label="Up"><svg class="i16"><use href="#up" /></svg></button>
        </div>
        <nav class="address">
          <svg class="i16"><use href="#tools16" /></svg>
          <svg class="i16 sep"><use href="#chev-r" /></svg><a href="#">Control Panel</a>
          <svg class="i16 sep"><use href="#chev-r" /></svg><a href="#">All Control Panel Items</a>
          <svg class="i16 sep"><use href="#chev-r" /></svg><a href="#">Administrative Tools</a>
          <button aria-label="Previous locations" class="drop"><svg class="i16"><use href="#chev-d" /></svg></button>
          <button aria-label="Refresh" class="reload"><svg class="i16"><use href="#reload" /></svg></button>
        </nav>
        <label class="search"><input type="text" aria-label="Search Administrative Tools"><svg class="i16"><use href="#lens" /></svg></label>
      </div>

      <div class="ex-body">
        <aside>
          <a v-for="p in places" :key="p.name" href="#" :class="p.kind">
            <svg class="i16"><use :href="'#' + p.icon" /></svg><span>{{ p.name }}</span>
            <svg v-if="p.pin" class="pin"><use href="#pin" /></svg>
          </a>
        </aside>
        <table>
          <thead><tr><th class="c-name">Name</th><th class="c-date">Date modified</th><th class="c-type">Type</th><th class="c-size">Size</th></tr></thead>
          <tbody>
            <tr v-for="f in files" :key="f[1]" :class="{ sel: f[1] === 'System Configuration' }">
              <td class="c-name"><div><svg class="i16" viewBox="0 0 16 16"><use :href="'#' + f[0]" /><use v-if="f[3]" href="#shield" /><use href="#arrow" /></svg>{{ f[1] }}</div></td>
              <td>10/10/2020 {{ f[2] }} AM</td>
              <td>Shortcut</td>
              <td class="c-size">2 KB</td>
            </tr>
          </tbody>
        </table>
      </div>

      <footer class="status">
        <span class="count">19 items</span>
        <span class="picked">1 item selected</span>
        <span>1.08 KB</span>
        <span class="fill"></span>
        <button class="details" aria-label="Details view"><svg viewBox="0 0 20 20"><path d="M3.500 4.500h3v3.500h-3zM3.500 8h3v4h-3zM3.500 12h3v3.500h-3z" fill="#fff" stroke="#888" /><path d="M9 6h4M15 6h4M9 10h4M15 10h4M9 14h4M15 14h4" stroke="#556" /></svg></button>
        <button class="thumbs" aria-label="Large icons view"><svg viewBox="0 0 14 12"><path d="M.500.500h13v11H.5z" fill="#fff" stroke="#8b8b8b" /><path d="M2 2h10v8H2z" fill="url(#g-photo)" /></svg></button>
      </footer>
    </section>

    <section class="dialog" role="dialog" aria-label="System Configuration">
      <header>
        <svg class="i16"><use href="#msconfig" /></svg>
        <h2>System Configuration</h2>
        <button aria-label="Close"><svg class="i16"><use href="#close" /></svg></button>
      </header>
      <div class="tabs" role="tablist">
        <button v-for="(t, i) in tabs" :key="t" role="tab" :class="['tab', 'tab-' + t.toLowerCase(), { on: i === 0 }]">{{ t }}</button>
      </div>
      <div class="pane">
        <fieldset>
          <legend>Startup selection</legend>
          <label class="radio"><input v-model="startup" type="radio" value="normal">Normal startup</label>
          <p>Load all device drivers and services</p>
          <label class="radio"><input v-model="startup" type="radio" value="diagnostic">Diagnostic startup</label>
          <p>Load basic devices and services only</p>
          <label class="radio"><input v-model="startup" type="radio" value="selective">Selective startup</label>
          <label class="check"><input v-model="loadServices" type="checkbox">Load system services</label>
          <label class="check"><input v-model="loadItems" type="checkbox">Load startup items</label>
          <label class="check dim"><input v-model="originalBoot" type="checkbox" disabled>Use original boot configuration</label>
        </fieldset>
      </div>
      <footer>
        <button class="ok">OK</button><button>Cancel</button><button disabled>Apply</button><button>Help</button>
      </footer>
    </section>

    <footer class="taskbar">
      <button class="start" aria-label="Start"><svg><use href="#t-start" /></svg></button>
      <label class="find"><svg class="i16"><use href="#t-lens" /></svg><input type="text" placeholder="Type here to search" aria-label="Type here to search"></label>
      <button v-for="a in apps" :key="a[1]" :class="['app', a[2]]" :aria-label="a[1]"><svg><use :href="'#' + a[0]" /></svg></button>
      <span class="fill"></span>
      <div class="tray">
        <svg class="i16"><use href="#s-up" /></svg>
        <svg class="i16"><use href="#s-cloud" /></svg>
        <svg class="i16"><use href="#s-net" /></svg>
        <svg class="i16"><use href="#s-vol" /></svg>
        <time>9:22 AM<br>10/10/2020</time>
        <svg class="i16"><use href="#s-note" /></svg>
      </div>
      <div class="mark">
        <svg viewBox="0 0 50 40"><path d="M17 0h33L31 27 9 20q-4-1-4 4 0 2 2 3l22 7 17-22V7l3 1v8L30 38 6 31Q0 29 0 22q0-4 3-8z" fill="#a5a9b5" /><path d="M21 2l17 4" stroke="#1c2940" stroke-width="2.500" /></svg>
        <span>The Collection Book</span>
      </div>
    </footer>
  </div>
</template>

<style>
body { background: #fff; }
</style>

<style scoped>
.desktop { position: relative; display: flex; flex-direction: column; min-height: 100vh; overflow: hidden; background: #fff; color: #000; font: 11px/16px "Open Sans", "Noto Sans", sans-serif; }
.desktop *, .desktop *::before { box-sizing: border-box; }
.sheet { position: absolute; width: 0; height: 0; }
button { display: flex; align-items: center; justify-content: center; margin: 0; padding: 0; border: 0; background: none; color: inherit; font: inherit; }
input, select { margin: 0; padding: 0; border: 0; outline: 0; background: none; font: inherit; }
a { color: inherit; text-decoration: none; }
h1, h2, p { margin: 0; font: inherit; }
svg { display: block; flex: none; }
.i12 { width: 12px; height: 12px; }
.i16 { width: 16px; height: 16px; }
.i32 { width: 32px; height: 32px; }
.fill { flex: 1; }

/* control panel */
.panel { flex: 1; }
.titlebar { display: flex; align-items: center; height: 24px; padding-left: 2px; gap: 5px; color: #999; }
.titlebar h1 { flex: 1; }
.winbtns { display: flex; margin-left: auto; color: #888; }
.winbtns button { width: 46px; height: 28px; }
.titlebar .winbtns { align-self: flex-start; padding-right: 2px; }
.titlebar .winbtns button { height: 20px; }
.navbar { display: flex; align-items: center; height: 38px; }
.arrows { display: flex; align-items: center; padding-left: 11px; color: #707070; }
.arrows button { width: 16px; margin-right: 14px; }
.arrows button:nth-child(2) { margin-right: 10px; }
.arrows .narrow { width: 12px; margin-right: 6px; }
.arrows button:last-child { margin-right: 5px; }
.arrows .off { color: #d4d4d4; }
.address { display: flex; flex: 1; align-items: center; height: 30px; padding-left: 2px; border: 1px solid #d9d9d9; }
.address .sep { width: 22px; color: #777; }
.address a + .sep { width: 26px; }
.address .drop { width: 30px; margin-left: auto; color: #777; }
.address .reload { width: 33px; height: 28px; border-left: 1px solid #d9d9d9; color: #707070; }
.search { display: flex; align-items: center; width: 202px; height: 30px; margin: 0 12px; padding: 0 6px 0 8px; border: 1px solid #d9d9d9; color: #707070; }
.search input { flex: 1; min-width: 0; }
.search input::placeholder { color: #6d6d6d; opacity: 1; }
.heading { display: flex; align-items: center; height: 64px; padding: 5px 85px 0 17px; border-bottom: 1px solid #dde3e8; color: #5a6b80; }
.heading h2 { flex: 1; padding-bottom: 3px; color: #003399; font-size: 15px; line-height: 20px; }
.heading select { width: 59px; margin-left: 14px; appearance: none; color: #0b5fb5; }
.tri { width: 8px; height: 5px; margin-left: 7px; }
.items { display: flex; padding: 24px 0 0 19px; color: #0b6b1c; font-size: 15px; line-height: 21px; }
.col { width: 250px; }
.col a { display: flex; align-items: center; gap: 11px; width: 230px; height: 50px; white-space: nowrap; }
.col a span { flex: none; max-width: 190px; }
.col:nth-child(3) a { white-space: normal; }
.col:nth-child(3) a span { width: 150px; }

/* explorer window */
.explorer { position: absolute; top: 235px; left: 433px; display: flex; flex-direction: column; width: 1125px; height: 634px; border: 1px solid #9c9c9c; background: #fff; box-shadow: 0 4px 14px rgba(0, 0, 0, .35); }
.ex-top { display: flex; height: 30px; }
.quick { display: flex; align-items: center; width: 229px; height: 29px; padding-left: 8px; }
.bar { width: 1px; height: 12px; margin: 0 12px 0 6px; background: #888; }
.quick .bar:last-child { margin: 0 0 0 7px; }
.doc { width: 13px; height: 16px; margin-right: 9px; }
.doc + .more { margin-left: -2px; }
.more { width: 8px; height: 8px; }
.manage { align-self: flex-end; height: 27px; line-height: 28px; text-align: center; color: #444; }
.peach { width: 104px; margin-right: 2px; background: #fccdb4; }
.lilac { width: 119px; background: #e9ccfc; }
.ex-top h2 { margin-left: 13px; line-height: 30px; color: #999; }
.ribbon { display: flex; align-items: stretch; height: 24px; border-bottom: 1px solid #dcdcdc; color: #333; }
.file { width: 56px; background: #0063b1; color: #fff; }
.rt { width: 58px; }
.view { width: 54px; margin-right: 5px; }
.tool-a { width: 104px; margin: 0 2px 0 -2px; }
.tool-b { width: 119px; }
.tool-a, .tool-b { border: solid; border-width: 0 1px; border-image: linear-gradient(#bbb, #fff) 1; }
.fold { width: 16px; margin-right: 6px; color: #888; }
.help { align-self: center; width: 16px; height: 16px; margin-right: 3px; border-radius: 8px; background: #0763bf; color: #fff; font-weight: 700; }
.explorer .navbar { height: 40px; }
.ex-body { display: flex; flex: 1; min-height: 0; }
aside { width: 159px; padding: 18px 2px 0 0; border-right: 1px solid #f0f0f0; }
aside a { display: flex; align-items: center; height: 24px; padding-left: 26px; gap: 3px; }
aside .child { padding-left: 32px; gap: 5px; }
aside .root { height: 24px; margin-top: 8px; padding-left: 24px; gap: 5px; }
aside .active { background: #d9d9d9; }
.pin { width: 14px; height: 14px; margin: 0 2px 0 auto; }
table { align-self: flex-start; margin-left: 15px; border-spacing: 0; table-layout: fixed; width: 600px; }
th { height: 33px; padding: 0 0 4px 6px; text-align: left; font-weight: 400; color: #5a6b85; }
.c-name { width: 258px; }
.c-date { width: 144px; }
.c-type { width: 100px; }
th.c-name { padding-left: 4px; }
td { height: 21px; padding: 0 0 0 6px; color: #6d6d6d; white-space: nowrap; }
td.c-name { padding-left: 4px; color: #000; }
td.c-name div { display: flex; align-items: center; gap: 4px; line-height: 20px; }
td.c-size { padding-right: 6px; text-align: right; }
.sel td { background: #d9d9d9; }
.status { display: flex; align-items: center; height: 24px; padding: 0 8px 0 14px; color: #1e3a5f; }
.count { width: 65px; }
.picked { width: 85px; }
.details { width: 22px; height: 24px; margin-right: 4px; border: 1px solid #3d9bc9; background: #cce8f6; }
.details svg { width: 20px; height: 20px; }
.thumbs svg { width: 14px; height: 12px; }

/* dialog */
.dialog { position: absolute; top: 324px; left: 675px; width: 571px; padding-bottom: 7px; border: 1px solid #555; background: #f0f0f0; box-shadow: 0 4px 18px rgba(0, 0, 0, .45); font: 11px/14px Roboto, "Open Sans", sans-serif; }
.dialog header { display: flex; align-items: center; height: 30px; padding: 0 5px 0 8px; gap: 5px; background: #fff; font: 11px/16px "Open Sans", sans-serif; }
.dialog h2 { flex: 1; }
.dialog header button { width: 20px; }
.tabs { display: flex; align-items: flex-end; height: 28px; padding-left: 6px; }
.tab { height: 19px; border: 1px solid #d9d9d9; border-width: 1px 1px 0 0; }
.tab-boot { width: 41px; padding-right: 11px; }
.tab-services { width: 52px; }
.tab-startup { width: 48px; }
.tab-tools { width: 40px; padding-right: 3px; }
.tab.on { position: relative; width: 52px; height: 22px; margin-bottom: -1px; padding-bottom: 2px; border-left-width: 1px; background: #fff; }
.pane { margin: 0 8px 0 6px; padding: 14px 11px; border: 1px solid #d9d9d9; box-shadow: inset 3px 0 #fff, inset 0 2px #fff, inset 0 -2px #fff, inset -2px 0 #fff; }
fieldset { height: 258px; min-width: 0; margin: 0 0 0 3px; padding: 0 11px; border: 1px solid #dcdcdc; }
legend { margin-left: -6px; padding: 0 2px; line-height: 14px; }
.radio, .check { display: flex; align-items: center; height: 14px; gap: 2px; }
.radio { margin-top: 7px; }
p + .radio { margin-top: 13px; }
fieldset p { margin: 5px 0 0 18px; }
.check { margin: 10px 0 0 30px; }
.dim { color: #7d7d7d; }
.radio input { width: 13px; height: 13px; border: 1px solid #333; border-radius: 7px; appearance: none; background: #fff; }
.radio input:checked { background: radial-gradient(circle, #222 3px, #fff 4px); }
.check input { width: 13px; height: 13px; border: 1px solid #333; appearance: none; background: #fff; }
.check input::before { content: ""; display: block; width: 9px; height: 5px; margin: 2px 0 0 1px; border: solid #333; border-width: 0 0 1px 1px; transform: rotate(-45deg); }
.dim input { border-color: #ccc; background: #fafafa; }
.dim input::before { border-color: #bbb; }
.dialog footer { display: flex; justify-content: flex-end; gap: 8px; padding: 8px 7px 0 0; }
.dialog footer button { width: 73px; height: 21px; border: 1px solid #adadad; background: #e1e1e1; }
.dialog footer .ok { border: 2px solid #0078d7; }
.dialog footer button:disabled { border-color: #bfbfbf; background: #ccc; color: #8a8a8a; }

/* taskbar */
.taskbar { position: relative; display: flex; height: 40px; background: linear-gradient(90deg, #1f373f, #1f343f 45%, #1a2640); }
.start { width: 48px; }
.start svg { width: 17px; height: 17px; }
.find { display: flex; align-items: center; width: 343px; padding-left: 11px; gap: 12px; border: 1px solid #b9bdbe; background: #f2f2f2; }
.find input { flex: 1; font-size: 14px; }
.find input::placeholder { color: #333; opacity: 1; }
.app { width: 49px; height: 40px; }
.app svg { width: 24px; height: 24px; }
.running { border-bottom: 2px solid #76b9ed; border-top: 2px solid transparent; }
.running svg { width: 20px; }
.current { background: #4b5c66; border-bottom: 2px solid #76b9ed; }
.tray { display: flex; align-items: center; padding-right: 20px; border-right: 1px solid #6a7385; margin-right: 4px; gap: 8px; color: #fff; }
.tray time { width: 58px; margin-right: 6px; line-height: 18px; text-align: center; }
.mark { position: absolute; right: 25px; bottom: 0; display: flex; width: 225px; height: 40px; opacity: .9; pointer-events: none; }
.mark svg { width: 50px; height: 40px; }
.mark span { margin-left: 11px; color: rgba(190, 200, 215, .7); font-size: 18px; line-height: 30px; white-space: nowrap; }
</style>
